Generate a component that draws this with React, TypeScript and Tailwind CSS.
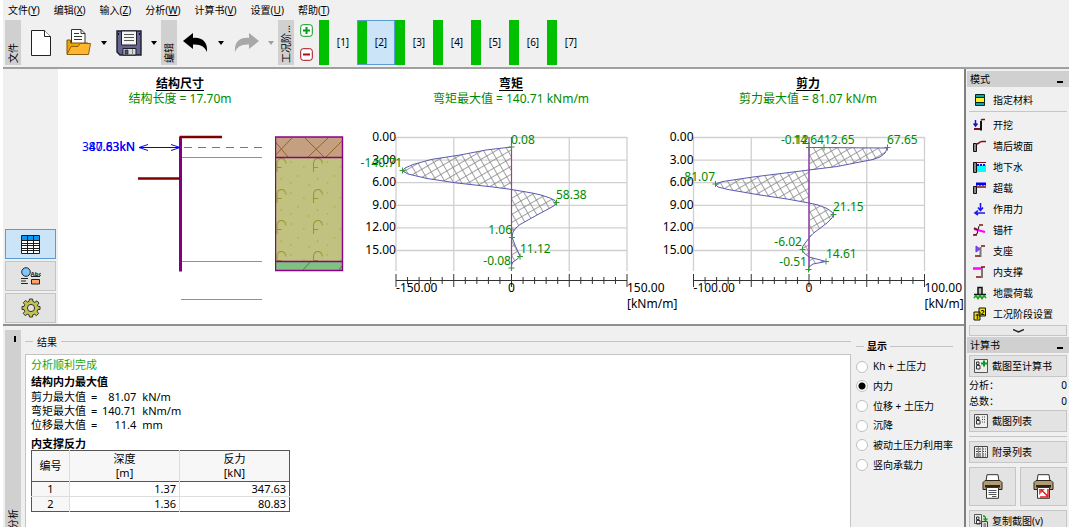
import type { ReactNode } from "react";
import { clsx } from "clsx";

const menus = [
  { label: "文件", hotkey: "Y" },
  { label: "编辑", hotkey: "X" },
  { label: "输入", hotkey: "Z" },
  { label: "分析", hotkey: "W" },
  { label: "计算书", hotkey: "V" },
  { label: "设置", hotkey: "U" },
  { label: "帮助", hotkey: "T" },
];

const stages = [1, 2, 3, 4, 5, 6, 7];

const displayOptions = [
  "Kh + 土压力",
  "内力",
  "位移 + 土压力",
  "沉降",
  "被动土压力利用率",
  "竖向承载力",
];

const maxima = [
  { label: "剪力最大值", value: "81.07", unit: "kN/m" },
  { label: "弯矩最大值", value: "140.71", unit: "kNm/m" },
  { label: "位移最大值", value: "11.4", unit: "mm" },
];

const reactions = [
  { id: 1, depth: "1.37", force: "347.63" },
  { id: 2, depth: "1.36", force: "80.83" },
];

/* ---------- toolbar icons ---------- */

const NewIcon = () => (
  <svg width="20" height="26" viewBox="0 0 20 26" fill="#fff" stroke="#222">
    <path d="M.5 .5H13.5L19.5 6.5V25.5H.5Z" />
    <path d="M13.5 .5V6.5H19.5" />
  </svg>
);

const OpenIcon = () => (
  <svg width="26" height="27" viewBox="0 0 26 27">
    <path d="M5.5 .5H15L19 4.5V18H5.5Z" fill="#fff" stroke="#333" />
    <path d="M15 .5V4.5H19M8 4.5H13M8 7.5H16M8 10.5H16" fill="none" stroke="#333" />
    <path d="M1 25V11H4.5V14H22V17" fill="#f0a400" stroke="#7a5408" />
    <path d="M1 25.5L5 17.5H12L14 14.5H24.5L22.5 25.5Z" fill="#fdb62f" stroke="#8f5f0c" />
  </svg>
);

const SaveIcon = () => (
  <svg width="26" height="26" viewBox="0 0 26 26">
    <path d="M1 1H25V25H4L1 22Z" fill="#65658c" stroke="#1c1c2c" strokeWidth="1.4" />
    <path d="M5.5 1H20.5V15H5.5Z" fill="#f4f4f4" stroke="#1c1c2c" />
    <path d="M8 4.5H18M8 7.5H18M8 10.5H18" stroke="#555" />
    <path d="M2.5 3V5M23.5 3V5" stroke="#111" />
    <path d="M7 18.5H20V25H7Z" fill="#d9d9d9" stroke="#1c1c2c" />
    <path d="M9 20H12V24H9Z" fill="#50507a" stroke="#1c1c2c" strokeWidth=".7" />
    <path d="M16.5 19V25" stroke="#888" />
  </svg>
);

const UndoIcon = ({ flip = false }: { flip?: boolean }) => (
  <svg
    width="26"
    height="20"
    viewBox="0 0 26 20"
    className={clsx(flip ? "-scale-x-100 text-[#a8a8a8]" : "text-black")}
  >
    <path d="M0 8L10 0V5C19 4 25 9 24 19C22 14 18 11 10 11.500V16Z" fill="currentColor" />
  </svg>
);

const Caret = ({ muted = false }: { muted?: boolean }) => (
  <svg width="6" height="4" viewBox="0 0 6 4">
    <path d="M0 0H6L3 4Z" fill={muted ? "#a0a0a0" : "#000"} />
  </svg>
);

const StageIcon = ({ plus = false }: { plus?: boolean }) => (
  <svg width="13" height="13" viewBox="0 0 13 13" fill="none" stroke={plus ? "#0a9a1e" : "#a80f1c"}>
    <rect x=".7" y=".7" width="11.6" height="11.6" rx="2.500" fill="#fff" />
    <path d={plus ? "M3 6.5H10M6.5 3V10" : "M3 6.5H10"} strokeWidth="2" />
  </svg>
);

/* ---------- view switch icons ---------- */

const TableIcon = () => (
  <svg width="19" height="19" viewBox="0 0 19 19">
    <path d="M.5 .5H18.5V18.5H.5Z" fill="#fff" />
    <path d="M.5 .5H18.5V5.5H.5Z" fill="#0a96f5" />
    <path d="M.5 .5H18.500V18.500H.5ZM.5 5.500H18.500M.5 8.500H18.500M.5 10.500H18.500M.5 13.500H18.500M.5 15.500H18.500M6.500 .5V18.500M12.500 .5V18.500" fill="none" stroke="#1c1c1c" />
  </svg>
);

const LegendIcon = () => (
  <svg width="20" height="19" viewBox="0 0 20 19">
    <circle cx="5" cy="5" r="4.300" fill="#7cc8ff" stroke="#222" />
    <text x="9.500" y="8.500" fontSize="6" fontWeight="700" fill="#222">
      Abc
    </text>
    <path d="M0 11.500H7M0 14H5M0 16.500H7M10 9.500H19" stroke="#222" strokeWidth="1.200" />
    <path d="M10.500 12.500H18.500V17H10.500Z" fill="#f9a56c" stroke="#222" />
  </svg>
);

const GearIcon = () => (
  <svg width="20" height="20" viewBox="0 0 20 20" fill="#c2c24e" stroke="#333" strokeLinejoin="round">
    <path
      d="M8.500 1H11.500L12 3.500L13.800 4.300L16 2.900L18 5L16.500 7L17.200 8.500H19V11.500H17L16.200 13.300L17.600 15.500L15.500 17.600L13.300 16.200L11.800 16.900L11.500 19H8.500L8 16.900L6.300 16.200L4.300 17.600L2.200 15.500L3.700 13.300L3 11.500H1V8.500H3L3.700 6.700L2.300 4.700L4.500 2.500L6.500 4L8 3.400Z"
    />
    <circle cx="10" cy="10" r="3.600" fill="#e3e3e3" />
  </svg>
);

/* ---------- side panel icons ---------- */

const Icon = ({ children }: { children: ReactNode }) => (
  <svg width="14" height="14" viewBox="0 0 14 14" fill="none" className="shrink-0">
    {children}
  </svg>
);

const wall = "#111";
const ground = "#7d1010";

const modes: { label: string; icon: ReactNode }[] = [
  {
    label: "开挖",
    icon: (
      <>
        <path d="M2.500 2V7M.5 5.500L2.500 8L4.500 5.500" stroke="#11e" strokeWidth="1.500" />
        <path d="M1 11H7" stroke={ground} strokeWidth="2" />
        <path d="M8 12.500V3" stroke={wall} strokeWidth="2" />
        <path d="M8 2.500L9 1.500H12" stroke={ground} strokeWidth="1.500" />
      </>
    ),
  },
  {
    label: "墙后坡面",
    icon: (
      <>
        <path d="M.5 12.500V4.500H3.500V12.500Z" fill="#888" stroke={wall} />
        <path d="M3.500 5C6 5 6 2.500 9 2.500H13" stroke={ground} strokeWidth="1.500" />
      </>
    ),
  },
  {
    label: "地下水",
    icon: (
      <>
        <path d="M4 5H13V12H4Z" fill="#0ff" />
        <path d="M3 2.500H13" stroke={ground} />
        <path d="M4 5H13" stroke="#11e" strokeWidth="2" strokeDasharray="2 1" />
        <path d="M.5 12.500V2.500H3.500V12.500Z" fill="#888" stroke={wall} />
      </>
    ),
  },
  {
    label: "超载",
    icon: (
      <>
        <path d="M3 1.500H13V5L11.500 4L10 5L8.500 4L7 5L5.500 4L3 5Z" fill="#00f" />
        <path d="M3 6H13" stroke={ground} strokeWidth="1.500" />
        <path d="M.5 12.500V5.500H3.500V12.500Z" fill="#888" stroke={wall} />
      </>
    ),
  },
  {
    label: "作用力",
    icon: (
      <path
        d="M7.500 1V8M5 5.500L7.500 8.500L10 5.500M3 11H12M5 8.500L2 11L5 13"
        stroke="#1a1af0"
        strokeWidth="1.600"
      />
    ),
  },
  {
    label: "锚杆",
    icon: (
      <>
        <path d="M1 12L4 11L6 3" stroke={wall} />
        <path d="M6 2H10M0 12H4" stroke={ground} strokeWidth="1.500" />
        <path d="M1 6L12 9" stroke="#f0f" strokeWidth="2.200" />
        <path d="M1 5L5 7" stroke={ground} strokeWidth="1.500" />
      </>
    ),
  },
  {
    label: "支座",
    icon: (
      <>
        <path d="M3 2L7 5L3 8Z" fill="#84f" stroke="#63d" />
        <path d="M7.500 13V3" stroke="#777" strokeWidth="2" />
        <path d="M8 2H12M2 12H7" stroke={ground} strokeWidth="1.500" />
      </>
    ),
  },
  {
    label: "内支撑",
    icon: (
      <>
        <path d="M0 3.500H9" stroke="#f0f" strokeWidth="2.500" />
        <path d="M9 13V2" stroke="#777" strokeWidth="2" />
        <path d="M8 2H12M3 12H8" stroke={ground} strokeWidth="1.500" />
      </>
    ),
  },
  {
    label: "地震荷载",
    icon: (
      <>
        <path d="M5 8V1.500H9V8" fill="#bbb" stroke={wall} strokeWidth="1.500" />
        <path d="M1 8.500H13" stroke={wall} strokeWidth="1.500" />
        <path d="M1 12L3 9.500L5 12.500L7 9.500L9 12.500L11 9.500L13 12" stroke="#18a018" strokeWidth="1.600" />
      </>
    ),
  },
  {
    label: "工况阶段设置",
    icon: (
      <>
        <path d="M1 5H7V13H1ZM6 1H12.500V9H6Z" fill="#f2e200" stroke={wall} />
        <text x="2" y="12" fontSize="7" fontWeight="700" fill="#111">
          1
        </text>
        <text x="7.500" y="8" fontSize="7" fontWeight="700" fill="#111">
          2
        </text>
      </>
    ),
  },
];

const MaterialIcon = () => (
  <Icon>
    <path d="M2.500 1.500H11.500V4.500H2.500ZM2.500 9.500H11.500V12.500H2.500Z" fill="#0aa" stroke="#022" />
    <path d="M2.500 4.500H11.500V9.500H2.500Z" fill="#fe2" stroke="#022" />
  </Icon>
);

const ShotIcon = ({ mark }: { mark: "plus" | "list" | "copy" }) => (
  <Icon>
    <path d={mark === "copy" ? "M.5 .5H7.500V9.500H.5Z" : "M.5 .5H13.500V13.500H.5Z"} fill="#eee" stroke="#555" />
    <path d="M2.500 3H5V5.500H2.500ZM2.500 6.500H6V10H2.500Z" stroke="#333" />
    {mark === "plus" && <path d="M7 4.500H13M10 1.500V7.500" stroke="#0a9a1e" strokeWidth="2" />}
    {mark === "list" && <path d="M8 3H12M8 5.500H12M8 8H12" stroke="#444" strokeDasharray="1 1" />}
    {mark === "copy" && (
      <>
        <path d="M7.500 7.500H13.500V13.500H7.500ZM9.500 10H12M9.500 12H12" fill="#ddd" stroke="#444" />
        <path d="M9 2C11.500 2 11.500 3 11.500 6M9.500 4.500L11.500 6.500L13.500 4.500" stroke="#18a018" strokeWidth="1.300" />
      </>
    )}
  </Icon>
);

const AppendixIcon = () => (
  <Icon>
    <path d="M.5 1.500H13.500V12.500H.5Z" fill="#eee" stroke="#444" />
    <path d="M2 4H12M2 6.500H12M2 9H12M2 11H12" stroke="#444" strokeDasharray="2 1" />
    <path d="M4.500 2V12M8.500 2V12" stroke="#888" />
  </Icon>
);

const PrinterIcon = ({ picture = false }: { picture?: boolean }) => (
  <svg width="21" height="25" viewBox="0 0 21 25">
    <path d="M4 7.500L5 .7H16L17 7.500Z" fill="#fff" stroke="#333" />
    <path d="M1 8.500L3 6.500H18L20 8.500V15.500H1Z" fill="#b39a72" stroke="#2b2419" />
    <path d="M3 11H18V13.500H3Z" fill="#2b2419" />
    <path d="M4.500 13.500H16.500V24.300H4.500Z" fill="#fff" stroke="#333" />
    {picture ? (
      <>
        <path d="M6 15H12L6 21Z" fill="#f04848" />
        <path d="M8 15.500L15 22.500M15 15V23H7" fill="none" stroke="#e02020" strokeWidth="1.500" />
      </>
    ) : (
      <path d="M6.500 16.500H14.500M6.500 18.500H14.500M6.500 20.500H14.500M10 22.500H14.500" stroke="#555" />
    )}
  </svg>
);

/* ---------- drawings ---------- */

type Label = { x: number; y: number; text: string; end?: boolean };

type Diagram = {
  title: string;
  summary: string;
  left: number;
  zero: number;
  scale: string;
  unit: string;
  curve: string;
  marks: [number, number][];
  labels: Label[];
};

const moment: Diagram = {
  title: "弯矩",
  summary: "弯矩最大值 = 140.71 kNm/m",
  left: 396,
  zero: 511.5,
  scale: "150.00",
  unit: "[kNm/m]",
  curve:
    "M511.5 147L486 150L460 155L431 159.500L413 164.500L405 168L402.500 171L408 174L427 178.500L457 183L493 187L511.500 189.500L532 193L541 195L550 198L555 200.500L556.500 202.500L555 205L551 207.500L537 215L520 224.500L516 228L513 232L512 237L515 245L520 256L518 258.500L513 262L511.500 265Z",
  marks: [[511.5, 147], [402.5, 170.5], [556.5, 202.5], [512, 237.5], [520, 256.5], [511.5, 268]],
  labels: [
    { x: 511, y: 144, text: "0.08" },
    { x: 402, y: 167, text: "-140.71", end: true },
    { x: 556, y: 199, text: "58.38" },
    { x: 512, y: 234, text: "1.06", end: true },
    { x: 520, y: 253, text: "11.12" },
    { x: 511, y: 265, text: "-0.08", end: true },
  ],
};

const shear: Diagram = {
  title: "剪力",
  summary: "剪力最大值 = 81.07 kN/m",
  left: 693.5,
  zero: 809,
  scale: "100.00",
  unit: "[kN/m]",
  curve:
    "M809 147.500L887.500 148L885 153L880 157L873 159.500L860 162L837 166.500L809 170L753 177L723 181.500L718 183L715.500 184.500L718 187L728 189.500L760 195L787 199L809 203L818 205L827 208.500L832 212L833.500 214.500L832 218L827 223L813 233.500L809 238L803 246L802 249.500L804 253L809 257L826 261.500L813 264L809 267Z",
  marks: [[809, 147.5], [824, 147.5], [887.5, 147.5], [715.5, 184], [833.5, 214.5], [802.5, 249.5], [826, 261.5], [808.5, 269.5]],
  labels: [
    { x: 781, y: 144, text: "-0.12" },
    { x: 824, y: 144, text: "14.64", end: true },
    { x: 824, y: 144, text: "12.65" },
    { x: 887, y: 144, text: "67.65" },
    { x: 715, y: 181, text: "-81.07", end: true },
    { x: 833, y: 211, text: "21.15" },
    { x: 802, y: 246, text: "-6.02", end: true },
    { x: 807, y: 266, text: "-0.51", end: true },
    { x: 826, y: 258, text: "14.61" },
  ],
};

const depths = ["0.00", "3.00", "6.00", "9.00", "12.00", "15.00"];
const ticks = Array.from({ length: 21 }, (_, i) => i);

function Caption({ title, summary }: { title: string; summary: string }) {
  return (
    <figcaption className="h-[58px] pt-1.5 text-center text-[12px] leading-[15px] whitespace-nowrap">
      <h2 className="font-bold underline underline-offset-2">{title}</h2>
      <p className="text-[#008a00]">{summary}</p>
    </figcaption>
  );
}

function DiagramFigure({ data, width }: { data: Diagram; width: number }) {
  const { left, zero } = data;
  const right = left + 231;
  const start = Math.floor(zero - width / 2) - (zero % 1 ? 0 : 1);
  const hatch = `hatch-${left}`;
  return (
    <figure className="shrink-0">
      <Caption title={data.title} summary={data.summary} />
      <svg width={width} height="187" viewBox={`${start} 128 ${width} 187`} className="overflow-visible text-[12px]">
        <defs>
          <pattern id={hatch} width="7" height="7" patternUnits="userSpaceOnUse" patternTransform="rotate(-30)">
            <path d="M0 .5H7M.5 0V7" stroke="#8a8a8a" strokeWidth=".8" />
          </pattern>
        </defs>
        <g stroke="#d0d0d0" strokeWidth="1.3">
          {depths.map((d, i) => (
            <path key={d} d={`M${left} ${137.5 + i * 22.6}H${right}`} />
          ))}
          {[0, 5, 15, 20].map((i) => (
            <path key={i} d={`M${left + i * 11.55} 137V271`} />
          ))}
        </g>
        <path d={data.curve} fill={`url(#${hatch})`} stroke="#5a5ab4" />
        <path d={`M${zero} 137V271`} stroke="#a03ca0" strokeWidth="1.2" />
        <g stroke="#333">
          <path d={`M${left} 280.5H${right}`} />
          {ticks.map((i) => (
            <path key={i} d={`M${left + i * 11.55} ${i % 5 ? "277V284" : "274V287"}`} />
          ))}
        </g>
        <g fill="#000">
          {depths.map((d, i) => (
            <text key={d} x={left} y={Math.round(141 + i * 22.6)} textAnchor="end">
              {d}
            </text>
          ))}
          <text x={left} y="292">-{data.scale}</text>
          <text x={zero} y="292" textAnchor="middle">0</text>
          <text x={right} y="292">{data.scale}</text>
          <text x={right} y="308">{data.unit}</text>
        </g>
        {data.marks.map(([x, y]) => (
          <path key={`${x}-${y}`} d={`M${x - 3} ${y}H${x + 3}M${x} ${y - 3}V${y + 3}`} stroke="#2f9e2f" />
        ))}
        <g fill="#008a00">
          {data.labels.map((l) => (
            <text key={l.text} x={l.x} y={l.y} textAnchor={l.end ? "end" : "start"}>
              {l.text}
            </text>
          ))}
        </g>
      </svg>
    </figure>
  );
}

function StructureFigure() {
  return (
    <figure className="shrink-0">
      <Caption title="结构尺寸" summary="结构长度 = 17.70m" />
      <svg width="190" height="187" viewBox="85 128 190 187" className="overflow-visible text-[12px]">
        <path d="M181 157.500H262M181 261.500H262M181 299.500H262" stroke="#c070c0" strokeWidth="1.2" />
        <path d="M184 147.500H262" stroke="#6a6af0" strokeDasharray="8 6" />
        <path d="M180.500 137V271.500" stroke="#800080" strokeWidth="3" />
        <path d="M179.500 137H222M138 178.500H180" stroke="#800000" strokeWidth="2.500" />
        <path d="M139 147.500H180M148 144.500L139 147.500L148 150.500M171 144.500L180 147.500L171 150.500" fill="none" stroke="#00f" />
        <g fill="#00f" textAnchor="end">
          <text x="135" y="151">347.63kN</text>
          <text x="135" y="151">80.83kN</text>
        </g>
      </svg>
    </figure>
  );
}

function SoilProfile() {
  return (
    <svg width="69" height="187" viewBox="275 128 69 187" className="mt-[58px] shrink-0" fill="none">
      <defs>
        <pattern id="soil" x="275.500" y="157" width="36.500" height="31" patternUnits="userSpaceOnUse">
          <path d="M1.500 15V6C2 3 4 1.500 6 1.500C9 1.500 10 4 10.500 6.500M1.500 10.500H6" fill="none" stroke="#96962a" />
          <path d="M15 5h1M28 10h1M22 19h1M5 22h1M15 26h1M33 28h1" stroke="#96962a" />
        </pattern>
      </defs>
      <path d="M275.500 137H342.500V157.500H275.500Z" fill="#c4a080" />
      <path d="M275.500 157.500H342.500V261.500H275.500Z" fill="#c1c180" />
      <path d="M275.500 157.500H342.500V261.500H275.500Z" fill="url(#soil)" />
      <path d="M275.500 261.500H342.500V270.500H275.500Z" fill="#80c080" />
      <path
        d="M275.500 142L288 157M275.500 155L292 138M305 138L324 157M308 157L328 138M342 141L326 157"
        stroke="#96602a"
      />
      <path d="M303 270L310 262M339 270L342 266" stroke="#3c8c3c" />
      <path d="M275.500 137H342.500V270.500H275.500ZM275.500 157.500H342.500M275.500 261.500H342.500" stroke="#8a008a" strokeWidth="1.400" />
    </svg>
  );
}

/* ---------- panels ---------- */

function SideTab({ children, className }: { children: ReactNode; className?: string }) {
  return (
    <div
      className={clsx(
        "flex w-4 shrink-0 rotate-180 items-center bg-[#d0d0d0] pt-0.5 text-[10px] leading-4 whitespace-nowrap [text-orientation:sideways] [writing-mode:vertical-rl]",
        className,
      )}
    >
      <span>{children}</span>
    </div>
  );
}

function Toolbar() {
  return (
    <div className="flex h-[47px] items-stretch pb-0.5 pl-0.5">
      <SideTab>文件</SideTab>
      <div className="flex w-[140px] items-center justify-between pr-1 pl-2.5">
        <button aria-label="新建"><NewIcon /></button>
        <button aria-label="打开" className="ml-1.5"><OpenIcon /></button>
        <button aria-label="打开选项"><Caret /></button>
        <button aria-label="保存"><SaveIcon /></button>
        <button aria-label="保存选项"><Caret /></button>
      </div>
      <SideTab>编辑</SideTab>
      <div className="flex w-[101px] items-center justify-between pr-1 pl-1.5">
        <button aria-label="撤销"><UndoIcon /></button>
        <button aria-label="撤销选项"><Caret /></button>
        <button aria-label="重做"><UndoIcon flip /></button>
        <button aria-label="重做选项"><Caret muted /></button>
      </div>
      <SideTab>工况阶...</SideTab>
      <div className="flex w-[25px] flex-col items-center justify-between py-1">
        <button aria-label="添加工况"><StageIcon plus /></button>
        <button aria-label="删除工况"><StageIcon /></button>
      </div>
      {stages.map((n) => (
        <button
          key={n}
          className={clsx(
            "flex w-[38px] items-stretch text-[10px]",
            n === 2 && "bg-[#cce4f7] outline -outline-offset-1 outline-[#5a9bd5]",
          )}
        >
          <span className="w-2.5 bg-[#00c000]" />
          <span className="flex-1 self-center text-center">[{n}]</span>
        </button>
      ))}
    </div>
  );
}

const viewButton = "flex h-[30px] items-center justify-center border";

function ViewSwitch() {
  return (
    <div className="flex w-[55px] shrink-0 flex-col justify-end gap-0.5 bg-[#f0f0f0] px-0.5 pb-px">
      <button aria-label="表格" className={clsx(viewButton, "border-[#5a9bd5] bg-[#cce4f7]")}><TableIcon /></button>
      <button aria-label="图例" className={clsx(viewButton, "border-[#c4c4c4] bg-[#e3e3e3]")}><LegendIcon /></button>
      <button aria-label="绘图设置" className={clsx(viewButton, "border-[#c4c4c4] bg-[#e3e3e3]")}><GearIcon /></button>
    </div>
  );
}

function Results() {
  return (
    <section className="flex min-w-0 flex-1 flex-col pt-2">
      <div className="flex h-5 items-start gap-1 text-[10px] leading-4 before:mt-[7px] before:h-px before:w-2 before:bg-[#c4c4c4] after:mt-[7px] after:h-px after:flex-1 after:bg-[#c4c4c4]">
        <h2>结果</h2>
      </div>
      <div className="flex-1 border border-b-0 border-[#c4c4c4] bg-white px-[5px] pt-0.5 text-[11px] leading-[14px]">
        <p className="leading-4 text-[#12a812]">分析顺利完成</p>
        <h3 className="mt-px leading-4 font-bold">结构内力最大值</h3>
        <dl>
          {maxima.map((m) => (
            <div key={m.label} className="flex">
              <dt className="w-[60px]">{m.label}</dt>
              <dd className="flex">
                <span>=</span>
                <span className="w-[39px] text-right">{m.value}</span>
                <span className="ml-1.5">{m.unit}</span>
              </dd>
            </div>
          ))}
        </dl>
        <h3 className="mt-1.5 leading-3 font-bold">内支撑反力</h3>
        <table className="w-[259px] table-fixed border-collapse border border-[#555] leading-[14px]">
          <thead>
            <tr className="h-[31px] border-b border-[#555] bg-[#f7f7f7]">
              <th className="w-[38px] border-r border-[#ddd] p-0 font-normal">编号</th>
              <th className="border-r border-[#ddd] p-0 font-normal">深度<br />[m]</th>
              <th className="p-0 font-normal">反力<br />[kN]</th>
            </tr>
          </thead>
          <tbody>
            {reactions.map((r) => (
              <tr key={r.id} className="h-[15px] border-t border-[#ddd] first:border-[#555]">
                <td className="border-r border-[#ddd] bg-[#f7f7f7] p-0 text-center">{r.id}</td>
                <td className="border-r border-[#ddd] p-0 pr-[3px] text-right">{r.depth}</td>
                <td className="p-0 pr-[3px] text-right">{r.force}</td>
              </tr>
            ))}
          </tbody>
        </table>
      </div>
    </section>
  );
}

function DisplayOptions() {
  return (
    <section className="w-[113px] shrink-0 pt-3 pr-[11px] pl-[5px] text-[10px]">
      <div className="flex items-center gap-[3px] leading-4 before:h-px before:w-2 before:bg-[#c4c4c4] after:h-px after:flex-1 after:bg-[#c4c4c4]">
        <h2 className="font-bold">显示</h2>
      </div>
      <div className="mt-[3px] grid h-[118px] grid-rows-6">
        {displayOptions.map((o) => (
          <label key={o} className="flex items-center gap-[5px] whitespace-nowrap">
            <input
              type="radio"
              name="display"
              defaultChecked={o === "内力"}
              className="size-3 shrink-0 appearance-none rounded-full border border-[#c0c0c0] bg-white checked:bg-[radial-gradient(circle,#000_3px,#fff_4px)]"
            />
            {o}
          </label>
        ))}
      </div>
    </section>
  );
}

function PanelHeader({ children }: { children: ReactNode }) {
  return (
    <div className="flex h-4 shrink-0 items-center justify-between bg-[#d0d0d0] pr-1.5 pl-[3px]">
      <h2>{children}</h2>
      <button aria-label="收起" className="mt-1.5 h-0.5 w-1.5 bg-black" />
    </div>
  );
}

const grayButton = "flex shrink-0 items-center gap-1 border border-[#c6c6c6] bg-[#e3e3e3] pl-1";
const modeButton = "flex w-full items-center gap-1.5 pl-1 whitespace-nowrap";

function SidePanel() {
  return (
    <aside className="flex w-[105px] shrink-0 flex-col overflow-hidden border-l-2 border-[#808080] bg-[#f0f0f0] pt-0.5 pl-px text-[10px] leading-4">
      <PanelHeader>模式</PanelHeader>
      <nav className="mx-0.5 mt-[3px] flex flex-col">
        <button className={clsx(modeButton, "h-[19px]")}><MaterialIcon />指定材料</button>
        <hr className="my-0.5 border-[#c6c6c6]" />
        <div className="grid h-[211px] grid-rows-10">
          {modes.map((m) => (
            <button key={m.label} className={modeButton}>
              <Icon>{m.icon}</Icon>
              {m.label}
            </button>
          ))}
        </div>
        <button aria-label="更多" className="flex h-[11px] items-center justify-center border border-[#c6c6c6] bg-[#e9e9e9]">
          <svg width="11" height="4" viewBox="0 0 11 4" fill="none">
            <path d="M0 .5L5.500 3L11 .5" stroke="#222" strokeWidth="1.500" />
          </svg>
        </button>
      </nav>
      <div className="mt-px flex flex-col">
        <PanelHeader>计算书</PanelHeader>
        <div className="mx-0.5 mt-0.5 flex flex-col">
          <button className={clsx(grayButton, "h-[22px]")}><ShotIcon mark="plus" />截图至计算书</button>
          <dl>
            <div className="flex justify-between"><dt>分析：</dt><dd>0</dd></div>
            <div className="flex justify-between"><dt>总数：</dt><dd>0</dd></div>
          </dl>
          <button className={clsx(grayButton, "mt-px h-[22px]")}><ShotIcon mark="list" />截图列表</button>
          <hr className="my-1 border-[#c6c6c6]" />
          <button className={clsx(grayButton, "h-[22px]")}><AppendixIcon />附录列表</button>
          <div className="my-1 grid grid-cols-2 gap-1">
            <button aria-label="打印" className="flex h-[39px] items-center justify-center border border-[#c6c6c6] bg-[#e3e3e3]"><PrinterIcon /></button>
            <button aria-label="打印图片" className="flex h-[39px] items-center justify-center border border-[#c6c6c6] bg-[#e3e3e3]"><PrinterIcon picture /></button>
          </div>
          <button className={clsx(grayButton, "h-[22px]")}><ShotIcon mark="copy" />复制截图(v)</button>
        </div>
      </div>
    </aside>
  );
}

export default function App() {
  return (
    <div className="flex h-screen flex-col overflow-hidden bg-white pl-[3px] font-['Noto_Sans','Noto_Sans_CJK_SC',sans-serif] text-black">
      <header className="shrink-0 border-b-2 border-[#a0a0a0] bg-[#f0f0f0]">
        <nav className="flex h-5 items-center gap-3.5 pl-[5px] text-[10px] leading-4">
          {menus.map((m) => (
            <button key={m.label}>
              {m.label}(<u>{m.hotkey}</u>)
            </button>
          ))}
        </nav>
        <Toolbar />
      </header>
      <div className="flex min-h-0 flex-1">
        <main className="flex min-w-0 flex-1 flex-col">
          <div className="flex shrink-0 overflow-hidden border-b-2 border-[#909090]">
            <ViewSwitch />
            <div className="flex min-w-0 flex-1 pt-px pb-[9px] pl-[27px]">
              <StructureFigure />
              <SoilProfile />
              <DiagramFigure data={moment} width={334} />
              <DiagramFigure data={shear} width={260} />
            </div>
          </div>
          <div className="flex min-h-0 flex-1 bg-[#f0f0f0]">
            <div className="mt-1 mr-1 ml-0.5 flex w-4 shrink-0 flex-col items-end justify-between bg-[#d0d0d0]">
              <button aria-label="收起" className="mt-1.5 mr-[5px] h-1.5 w-0.5 bg-black" />
              <SideTab className="-mb-1">分析</SideTab>
            </div>
            <Results />
            <DisplayOptions />
          </div>
        </main>
        <SidePanel />
      </div>
    </div>
  );
}
